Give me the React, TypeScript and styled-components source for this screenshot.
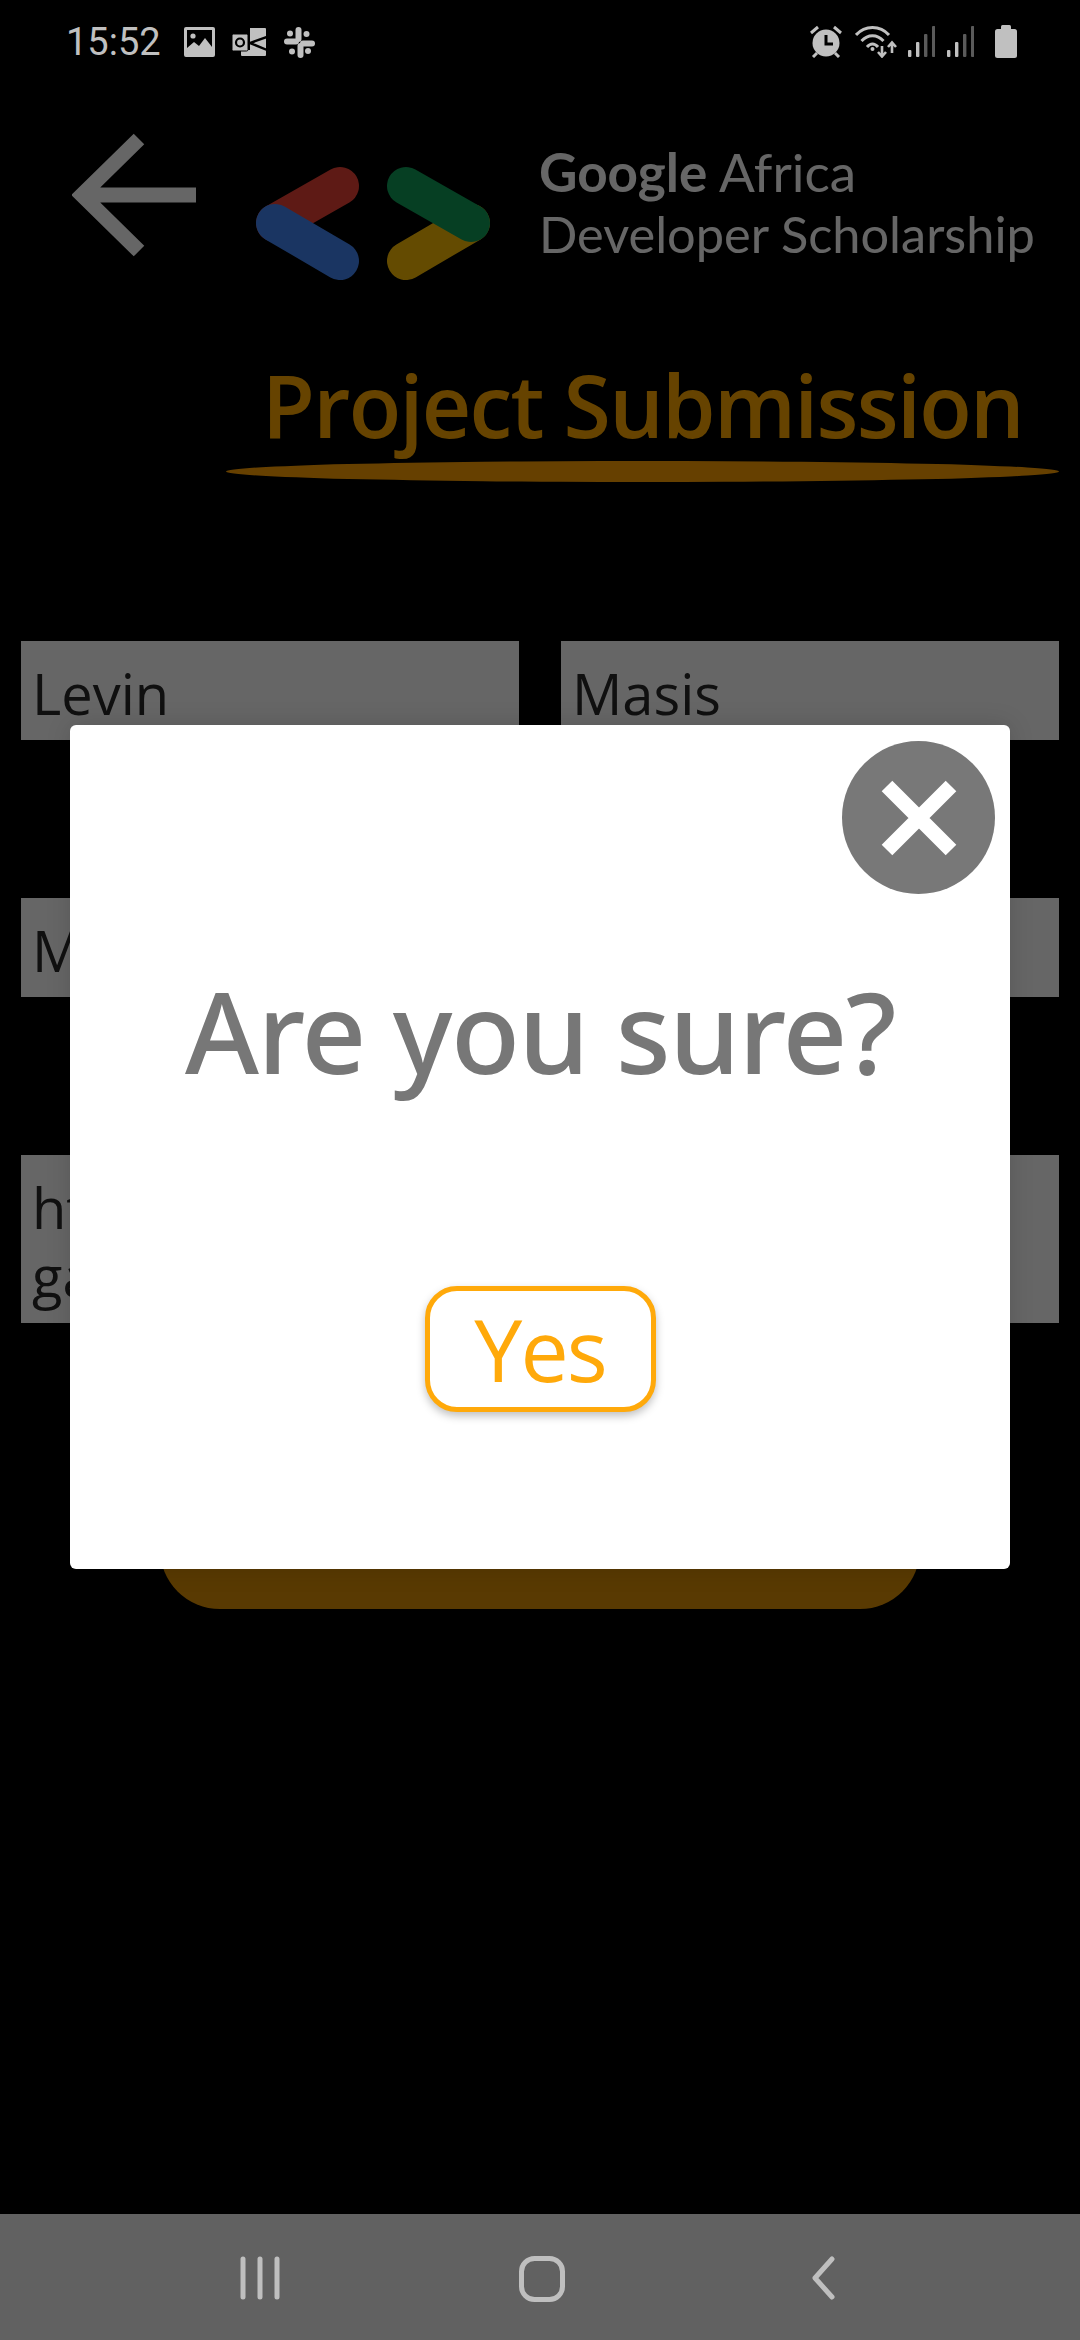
import styled, { createGlobalStyle } from "styled-components";

const GlobalStyle = createGlobalStyle`
  html, body {
    margin: 0;
    padding: 0;
    background: #000;
  }
  * {
    box-sizing: border-box;
  }
`;

function PictureIcon() {
  return (
    <svg width="31" height="30" viewBox="0 0 31 30">
      <path
        fill="#c0c0c0"
        fillRule="evenodd"
        d="M2 0h27a2 2 0 0 1 2 2v26a2 2 0 0 1-2 2H2a2 2 0 0 1-2-2V2a2 2 0 0 1 2-2zM3 3v18l7-6 5 4 6-8 7 9V3z"
      />
      <circle cx="9" cy="9" r="2.6" fill="#c0c0c0" />
    </svg>
  );
}

function OutlookIcon() {
  return (
    <svg width="35" height="30" viewBox="0 0 35 30">
      <path fill="#c0c0c0" d="M18 1h15a1 1 0 0 1 1 1v26a1 1 0 0 1-1 1H10a1 1 0 0 1-1-1v-5h9z" />
      <path d="M35 10L18 16l17 7" fill="none" stroke="#000" strokeWidth="2.4" />
      <rect x="0" y="7" width="16" height="17" rx="1.5" fill="#c0c0c0" stroke="#000" strokeWidth="1" />
      <circle cx="8" cy="15.5" r="4" fill="none" stroke="#000" strokeWidth="2.2" />
    </svg>
  );
}

function SlackIcon() {
  return (
    <svg width="31" height="31" viewBox="0 0 31 31" fill="#c0c0c0">
      <rect x="11.5" y="0" width="6" height="15" rx="3" />
      <rect x="16" y="11.5" width="15" height="6" rx="3" transform="translate(0 2)" />
      <rect x="13.5" y="16" width="6" height="15" rx="3" />
      <rect x="0" y="13.5" width="15" height="6" rx="3" transform="translate(0 -2)" />
      <circle cx="22.5" cy="7" r="3" />
      <circle cx="24" cy="24" r="3" />
      <circle cx="8" cy="24.5" r="3" />
      <circle cx="6" cy="6.5" r="3" />
    </svg>
  );
}

function AlarmIcon() {
  return (
    <svg width="34" height="33" viewBox="0 0 34 33">
      <circle cx="17" cy="18" r="13.5" fill="#c0c0c0" />
      <path d="M17 10v9h7" fill="none" stroke="#000" strokeWidth="3" />
      <path d="M2 8l7-6M32 8l-7-6M4 32l4-4M30 32l-4-4" stroke="#c0c0c0" strokeWidth="3" fill="none" />
    </svg>
  );
}

function WifiIcon() {
  return (
    <svg width="42" height="33" viewBox="0 0 42 33" fill="none" stroke="#c0c0c0" strokeWidth="3">
      <path d="M1 10C10 0 25 0 34 10" />
      <path d="M6.5 16C13 9 22 9 28.5 16" />
      <path d="M12 22C15.5 18 19.5 18 23 22" />
      <circle cx="17.5" cy="24" r="2" fill="#c0c0c0" stroke="none" />
      <path d="M27 21v10M23 27l4 4.5 4-4.5" strokeWidth="2.6" />
      <path d="M37 28V18M33 22l4-4.5 4 4.5" strokeWidth="2.6" />
    </svg>
  );
}

function SignalIcon() {
  return (
    <svg width="27" height="31" viewBox="0 0 27 31">
      <rect x="0" y="24" width="3.4" height="7" rx="1" fill="#c0c0c0" />
      <rect x="8" y="16" width="3.4" height="15" rx="1" fill="#c0c0c0" />
      <rect x="16" y="8" width="3.4" height="23" rx="1" fill="#5a5a5a" />
      <rect x="24" y="0" width="3.4" height="31" rx="1" fill="#5a5a5a" />
    </svg>
  );
}

function BatteryIcon() {
  return (
    <svg width="22" height="33" viewBox="0 0 22 33" fill="#c0c0c0">
      <rect x="6" y="0" width="10" height="5" rx="1.5" />
      <rect x="0" y="4" width="22" height="29" rx="2.5" />
    </svg>
  );
}

function BackArrow() {
  return (
    <svg width="130" height="130" viewBox="0 0 130 130">
      <path d="M124 64H10M67 8L10 64l57 56" fill="none" stroke="#fff" strokeWidth="15" />
    </svg>
  );
}

function GadsLogo() {
  return (
    <svg width="236" height="116" viewBox="0 0 236 116" fill="none" strokeWidth="38" strokeLinecap="round">
      <path d="M85 20L20 57" stroke="#ea4335" />
      <path d="M20 57L85 95" stroke="#4285f4" />
      <path d="M151 95L216 57" stroke="#fbbc04" />
      <path d="M151 20L216 57" stroke="#0f9d58" />
    </svg>
  );
}

function CloseIcon() {
  return (
    <svg width="80" height="80" viewBox="0 0 80 80">
      <path d="M8 8l64 64M72 8L8 72" stroke="#fff" strokeWidth="15" fill="none" />
    </svg>
  );
}

function RecentsIcon() {
  return (
    <svg width="40" height="44" viewBox="0 0 40 44" stroke="#bfbfbf" strokeWidth="5" strokeLinecap="round">
      <path d="M3 3v38M20 3v38M37 3v38" />
    </svg>
  );
}

function HomeIcon() {
  return (
    <svg width="46" height="46" viewBox="0 0 46 46">
      <rect x="2.5" y="2.5" width="41" height="41" rx="13" fill="none" stroke="#bfbfbf" strokeWidth="5" />
    </svg>
  );
}

function NavBackIcon() {
  return (
    <svg width="31" height="44" viewBox="0 0 31 44">
      <path d="M28 3L11 22l17 19" fill="none" stroke="#bfbfbf" strokeWidth="5" strokeLinecap="round" strokeLinejoin="round" />
    </svg>
  );
}

export default function App() {
  return (
    <Screen>
      <GlobalStyle />
      <StatusBar>
        <StatusGroup $gap={17}>
          <Clock>15:52</Clock>
          <PictureIcon />
          <OutlookIcon />
          <SlackIcon />
        </StatusGroup>
        <StatusGroup $gap={11.5}>
          <AlarmIcon />
          <WifiIcon />
          <SignalIcon />
          <SignalIcon />
          <BatteryWrap>
            <BatteryIcon />
          </BatteryWrap>
        </StatusGroup>
      </StatusBar>

      <Header>
        <BackArrow />
        <LogoWrap>
          <GadsLogo />
        </LogoWrap>
        <Brand>
          <BrandLine $size={53}>
            <b>Google</b> Africa
          </BrandLine>
          <BrandLine $size={50.5}>Developer Scholarship</BrandLine>
        </Brand>
      </Header>

      <TitleBlock>
        <Title>Project Submission</Title>
        <TitleRule />
      </TitleBlock>

      <Form>
        <Field>Levin</Field>
        <Field>Masis</Field>
        <Field $wide>M</Field>
        <Field $wide $tall>
          ht
          <br />
          ga
        </Field>
      </Form>
      <SubmitBar />

      <NavBar>
        <RecentsIcon />
        <HomeIcon />
        <NavBackIcon />
      </NavBar>

      <Backdrop>
        <Modal>
          <CloseButton aria-label="Close">
            <CloseIcon />
          </CloseButton>
          <ModalTitle>Are you sure?</ModalTitle>
          <YesButton>Yes</YesButton>
        </Modal>
      </Backdrop>
    </Screen>
  );
}

const Screen = styled.div`
  position: relative;
  width: 1080px;
  height: 2340px;
  overflow: hidden;
  display: flex;
  flex-direction: column;
  background: #000;
  font-family: "Open Sans", "Noto Sans", sans-serif;
`;

const StatusBar = styled.div`
  position: relative;
  z-index: 2;
  height: 80px;
  padding: 25px 63px 0 66px;
  display: flex;
  align-items: flex-start;
  justify-content: space-between;
`;

const StatusGroup = styled.div<{ $gap: number }>`
  display: flex;
  align-items: center;
  gap: ${(p) => p.$gap}px;
`;

const BatteryWrap = styled.div`
  display: flex;
  margin-left: 10px;
`;

const Clock = styled.span`
  font-family: Roboto, sans-serif;
  font-size: 38px;
  line-height: 34px;
  color: #c0c0c0;
  margin-right: 6px;
`;

const Header = styled.div`
  height: 266px;
  padding: 51px 0 0 72px;
  display: flex;
  align-items: flex-start;
`;

const LogoWrap = styled.div`
  margin: 35px 0 0 53px;
`;

const Brand = styled.div`
  margin: 10px 0 0 48px;
  color: #fff;
  font-family: Lato, sans-serif;
`;

const BrandLine = styled.div<{ $size: number }>`
  font-size: ${(p) => p.$size}px;
  line-height: 62px;
  white-space: nowrap;

  b {
    font-weight: 700;
  }
`;

const TitleBlock = styled.div`
  margin-left: 226px;
  width: 833px;
  display: flex;
  flex-direction: column;
  align-items: center;
`;

const Title = styled.h1`
  margin: 0;
  font-size: 86px;
  font-weight: 600;
  letter-spacing: -1.7px;
  line-height: 118px;
  color: #ffa900;
  white-space: nowrap;
`;

const TitleRule = styled.div`
  width: 100%;
  height: 21px;
  margin-top: -3px;
  border-radius: 50%;
  background: #ffa000;
`;

const Form = styled.div`
  margin-top: 159px;
  padding: 0 21px;
  display: grid;
  grid-template-columns: 1fr 1fr;
  column-gap: 42px;
  row-gap: 158px;
`;

const Field = styled.div<{ $wide?: boolean; $tall?: boolean }>`
  grid-column: ${(p) => (p.$wide ? "1 / -1" : "auto")};
  height: ${(p) => (p.$tall ? "168px" : "99px")};
  padding: 18px 11px 0;
  background: #fff;
  color: #2a2a2a;
  font-size: 56px;
  line-height: 68px;
`;

const SubmitBar = styled.div`
  width: 760px;
  height: 150px;
  margin: 136px auto 0;
  border-radius: 60px;
  background: #df9105;
`;

const NavBar = styled.div`
  position: relative;
  z-index: 2;
  margin-top: auto;
  height: 126px;
  padding: 42px 0 0 240px;
  display: flex;
  align-items: flex-start;
  gap: 239px;
  background: #616161;
`;

const Backdrop = styled.div`
  position: absolute;
  inset: 0;
  z-index: 1;
  padding-top: 725px;
  display: flex;
  justify-content: center;
  align-items: flex-start;
  background: rgba(0, 0, 0, 0.6);
`;

const Modal = styled.div`
  position: relative;
  width: 940px;
  height: 844px;
  padding-top: 228px;
  display: flex;
  flex-direction: column;
  align-items: center;
  border-radius: 6px;
  background: #fff;
  box-shadow: 0 0 24px rgba(0, 0, 0, 0.15);
`;

const CloseButton = styled.button`
  position: absolute;
  top: 16px;
  right: 15px;
  width: 153px;
  height: 153px;
  padding: 0;
  border: 0;
  border-radius: 50%;
  display: flex;
  align-items: center;
  justify-content: center;
  background: #787878;
`;

const ModalTitle = styled.h2`
  margin: 0;
  font-family: "Noto Sans", sans-serif;
  font-size: 113px;
  font-weight: 500;
  letter-spacing: -1.5px;
  line-height: 154px;
  color: #777;
  white-space: nowrap;
`;

const YesButton = styled.button`
  margin-top: 179px;
  width: 231px;
  height: 126px;
  padding: 0;
  border: 5px solid #ffa90a;
  border-radius: 32px;
  background: #fff;
  color: #ffa90a;
  font-family: inherit;
  font-size: 86px;
  letter-spacing: -2px;
  line-height: 100px;
  box-shadow: 0 4px 8px rgba(0, 0, 0, 0.25);
`;
